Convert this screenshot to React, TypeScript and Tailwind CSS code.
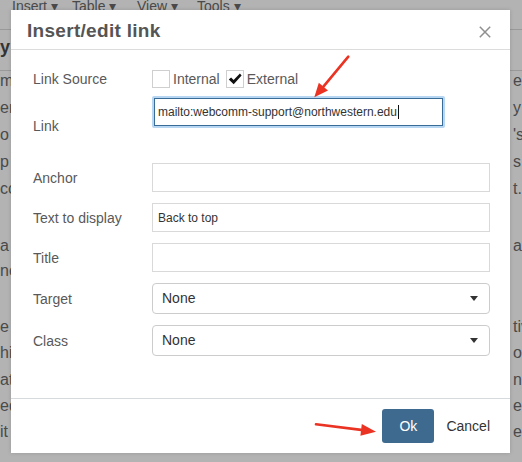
import React from "react";

const p1: [string, string][] = [
  ["m", "er"],
  ["er", "y"],
  ["o", "'s"],
  ["p", "s g"],
  ["cc", "t."],
];
const p2: [string, string][] = [
  ["a", "a"],
  ["nc", ""],
];
const p3: [string, string][] = [
  ["e", "tiv"],
  ["hi", "om"],
  ["at", "n l"],
  ["ed", "en"],
  ["it", "e"],
];

function Lines({ rows, lh }: { rows: [string, string][]; lh: string }) {
  return (
    <div className={lh}>
      {rows.map(([l, r], i) => (
        <div key={i} className="flex justify-between whitespace-nowrap">
          <span>{l}</span>
          <span className="w-[9px]">{r}</span>
        </div>
      ))}
    </div>
  );
}

function Row({ label, children, h }: { label: string; children: React.ReactNode; h: string }) {
  return (
    <div className={`flex items-center ${h}`}>
      <div className="w-[119px] shrink-0 leading-[16px]">{label}</div>
      <div className="flex-1">{children}</div>
    </div>
  );
}

function Select() {
  return (
    <div className="flex h-[31px] items-center justify-between rounded-[4px] border border-[#cccccc] bg-white pl-[9px] pr-[11px] text-[14px] text-[#333]">
      <span>None</span>
      <span className="h-0 w-0 border-x-[4px] border-t-[5px] border-x-transparent border-t-[#333]" />
    </div>
  );
}

export default function App() {
  return (
    <div className="relative h-[462px] w-[522px] overflow-hidden bg-[#b3b3b3] font-['Liberation_Sans',Arial,sans-serif] text-[16px] text-[#4a4a4a]">
      {/* background editor */}
      <div className="flex h-[30px] border-b border-[#999] pl-[12px] text-[14px]">
        <div className="-mt-[4px] flex leading-[20px]">
          <span className="w-[60px]">Insert ▾</span>
          <span className="w-[65px]">Table ▾</span>
          <span className="w-[60px]">View ▾</span>
          <span>Tools ▾</span>
        </div>
      </div>
      <div className="h-[41px] border-b border-[#999] pt-[8px] text-[18px] font-bold leading-[18px] text-[#333]">y</div>
      <div className="-mt-[4px]">
        <Lines rows={p1} lh="leading-[27px]" />
        <div className="mt-[31px]">
          <Lines rows={p2} lh="leading-[25px]" />
        </div>
        <div className="mt-[31px]">
          <Lines rows={p3} lh="leading-[26.25px]" />
        </div>
      </div>

      {/* dialog */}
      <div className="absolute left-[11px] top-[10px] flex h-[443px] w-[499px] flex-col bg-white shadow-[0_0_4px_rgba(0,0,0,0.15)]">
        <div className="flex h-[40px] shrink-0 items-start justify-between border-b border-[#dcdcdc] pl-[16px] pr-[19px] pt-[10px]">
          <div className="text-[19px] font-bold leading-[22px] tracking-[0.3px] text-[#555]">Insert/edit link</div>
          <svg className="mt-[6px]" width="12" height="12" viewBox="0 0 12 12">
            <path d="M0.8 0.8 L11.2 11.2 M11.2 0.8 L0.8 11.2" stroke="#8f8f8f" strokeWidth="1.5" />
          </svg>
        </div>

        <div className="flex-1 pl-[22px] pr-[20px] pt-[19px] text-[14px] text-[#595959]">
          <Row label="Link Source" h="h-[19px]">
            <div className="flex items-center">
              <span className="h-[18px] w-[18px] border border-[#cfcfcf] bg-white" />
              <span className="ml-[3px] leading-[16px]">Internal</span>
              <span className="ml-[6px] h-[18px] w-[18px] border border-[#cfcfcf] bg-white">
                <svg width="16" height="16" viewBox="0 0 16 16">
                  <path d="M1.8 8.6 L4.1 6.4 L6.6 9.1 L12.9 2.6 L14.6 4.4 L6.7 13.2 Z" fill="#111" />
                </svg>
              </span>
              <span className="ml-[3px] leading-[16px]">External</span>
            </div>
          </Row>

          <div className="mt-[8px] flex h-[38px] items-start">
            <div className="mt-[22px] w-[119px] shrink-0 leading-[16px]">Link</div>
            <div className="flex h-[32px] w-[293px] items-center rounded-[2px] border-2 border-[#b7d6f2] bg-white pl-[4px] text-[12px] text-[#333] shadow-[inset_0_0_0_1px_#3a6c98]">
              <span>mailto:webcomm-support@northwestern.edu</span>
              <span className="ml-[1px] h-[14px] w-px bg-[#111]" />
            </div>
          </div>

          <div className="mt-[29px]">
            <Row label="Anchor" h="h-[29px]">
              <div className="h-[29px] border border-[#d9d9d9] bg-white" />
            </Row>
          </div>
          <div className="mt-[11px]">
            <Row label="Text to display" h="h-[29px]">
              <div className="flex h-[29px] items-center border border-[#d9d9d9] bg-white pl-[5px] text-[12px] text-[#333]">
                Back to top
              </div>
            </Row>
          </div>
          <div className="mt-[11px]">
            <Row label="Title" h="h-[29px]">
              <div className="h-[29px] border border-[#d9d9d9] bg-white" />
            </Row>
          </div>
          <div className="mt-[11px]">
            <Row label="Target" h="h-[31px]">
              <Select />
            </Row>
          </div>
          <div className="mt-[11px]">
            <Row label="Class" h="h-[31px]">
              <Select />
            </Row>
          </div>
        </div>

        <div className="flex h-[55px] shrink-0 items-center justify-end gap-[12px] border-t border-[#d6dadd] pr-[20px] text-[14px] text-[#333]">
          <div className="flex h-[34px] w-[52px] items-center justify-center rounded-[3px] bg-[#3f6a8f] text-white">Ok</div>
          <div>Cancel</div>
        </div>
      </div>

      {/* annotation arrows */}
      <svg className="pointer-events-none absolute left-0 top-0" width="522" height="462" viewBox="0 0 522 462">
        <line x1="348.3" y1="56.7" x2="323.4" y2="86.6" stroke="#ea3323" strokeWidth="2.6" strokeLinecap="round" />
        <polygon points="314.3,97.3 328,90.5 318.8,82.7" fill="#ea3323" />
        <line x1="316" y1="424.3" x2="361.1" y2="429.9" stroke="#ea3323" strokeWidth="2.6" strokeLinecap="round" />
        <polygon points="376,431.7 360.4,435.8 361.8,423.9" fill="#ea3323" />
      </svg>
    </div>
  );
}
